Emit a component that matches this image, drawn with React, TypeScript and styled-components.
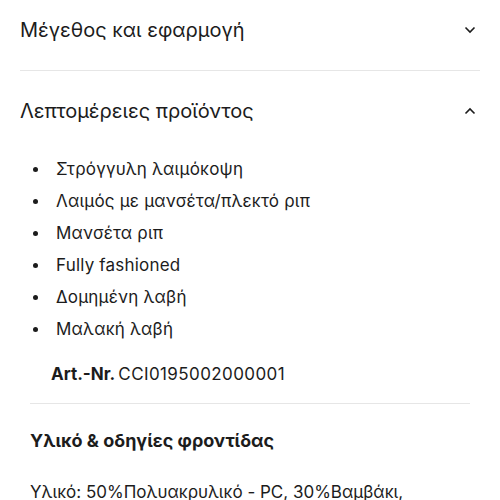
import styled, { createGlobalStyle } from 'styled-components';

const GlobalStyle = createGlobalStyle`
    body {
        margin: 0;
        background: #ffffff;
        font-family: Inter, "Noto Sans", sans-serif;
        color: #1c1c1c;
    }
`;

//
//Page shell, shifted up a bit like a scrolled product page
const Page = styled.div`
    width: 500px;
    height: 500px;
    overflow: hidden;
`;

const Inner = styled.div`
    margin-top: -10px;
    padding: 0 20px;
`;

const Section = styled.section<{ $divider?: boolean }>`
    border-bottom: ${(p) => (p.$divider ? '1px solid #e6e6e6' : 'none')};
`;

const Header = styled.div`
    height: 80px;
    display: flex;
    align-items: center;
    justify-content: space-between;
`;

const Title = styled.span`
    font-size: 20px;
    font-weight: 400;
`;

const Panel = styled.div`
    padding: 2px 10px 0;
`;

const List = styled.ul`
    list-style: none;
    margin: 0;
    padding: 0;
`;

const Item = styled.li`
    display: flex;
    align-items: center;
    height: 32px;
    font-size: 17px;
    letter-spacing: 0.2px;
    &::before {
        content: '';
        width: 5px;
        height: 5px;
        border-radius: 50%;
        background: #1c1c1c;
        margin: 0 18px 0 3px;
    }
`;

const ArtRow = styled.div`
    margin-top: 16px;
    padding: 0 0 17px 21px;
    height: 43px;
    box-sizing: border-box;
    font-size: 17px;
    line-height: 26px;
    border-bottom: 1px solid #e6e6e6;
`;

const Label = styled.b`
    font-weight: 700;
    margin-right: 3px;
`;

const Code = styled.span`
    letter-spacing: 0.4px;
`;

const SubTitle = styled.div`
    padding-top: 24px;
    font-size: 18px;
    font-weight: 700;
    line-height: 26px;
`;

const Text = styled.p`
    margin: 25px 0 0;
    font-size: 17px;
    line-height: 26px;
`;

const Chevron = ({ up }: { up?: boolean }) => (
    <svg width="12" height="8" viewBox="0 0 12 8" style={{ marginRight: 4 }}>
        <path
            d={up ? 'M1.5 6.5 L6 2 L10.5 6.5' : 'M1.5 1.5 L6 6 L10.5 1.5'}
            fill="none"
            stroke="#1c1c1c"
            strokeWidth="1.6"
        />
    </svg>
);

const features = [
    'Στρόγγυλη λαιμόκοψη',
    'Λαιμός με μανσέτα/πλεκτό ριπ',
    'Μανσέτα ριπ',
    'Fully fashioned',
    'Δομημένη λαβή',
    'Μαλακή λαβή',
];

const App = () => {
    return (
        <Page>
            <GlobalStyle />
            <Inner>
                <Section $divider>
                    <Header>
                        <Title>Μέγεθος και εφαρμογή</Title>
                        <Chevron />
                    </Header>
                </Section>
                <Section>
                    <Header>
                        <Title>Λεπτομέρειες προϊόντος</Title>
                        <Chevron up />
                    </Header>
                    <Panel>
                        <List>
                            {features.map((f) => (
                                <Item key={f}>{f}</Item>
                            ))}
                        </List>
                        <ArtRow>
                            <Label>Art.-Nr.</Label>
                            <Code>CCI0195002000001</Code>
                        </ArtRow>
                        <SubTitle>Υλικό &amp; οδηγίες φροντίδας</SubTitle>
                        <Text>Υλικό: 50%Πολυακρυλικό - PC, 30%Βαμβάκι, 20%Μαλλί</Text>
                    </Panel>
                </Section>
            </Inner>
        </Page>
    );
};

export default App;
